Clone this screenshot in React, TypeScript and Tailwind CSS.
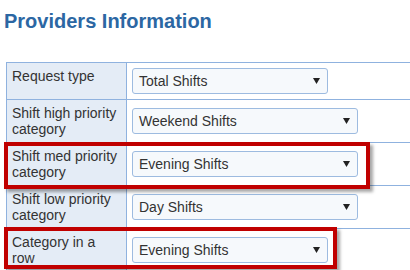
import React from "react";

const rows: { label: React.ReactNode; value: string; w: string }[] = [
  { label: "Request type", value: "Total Shifts", w: "w-[196px]" },
  { label: <>Shift high priority<br />category</>, value: "Weekend Shifts", w: "w-[226px]" },
  { label: <>Shift med priority<br />category</>, value: "Evening Shifts", w: "w-[226px]" },
  { label: <>Shift low priority<br />category</>, value: "Day Shifts", w: "w-[226px]" },
  { label: <>Category in a<br />row</>, value: "Evening Shifts", w: "w-[196px]" },
];

function Select({ value, w }: { value: string; w: string }) {
  return (
    <div
      className={`${w} h-[26px] flex items-center justify-between border border-[#9dbbe0] rounded-[3px] bg-[#f6f9fc] pl-[6px] pr-[7px] text-[14px] text-[#333]`}
    >
      <span>{value}</span>
      <svg width="7" height="6" viewBox="0 0 7 6">
        <polygon points="0,0 7,0 3.5,6" fill="#222" />
      </svg>
    </div>
  );
}

export default function App() {
  return (
    <div
      className="relative w-[410px] h-[270px] overflow-hidden bg-white"
      style={{ fontFamily: '"Liberation Sans", Arial, sans-serif' }}
    >
      <h1 className="ml-[4px] mt-[10px] text-[20px] leading-[22px] font-bold text-[#2c67a3]">
        Providers Information
      </h1>
      <table className="mt-[30px] ml-[6px] w-[430px] border-collapse">
        <tbody>
          {rows.map((r, i) => (
            <tr key={i}>
              <td className="w-[120px] border border-[#8fb2df] bg-[#e4ecf6] p-[5px] align-top text-[14px] leading-[16px] text-[#333]">
                {r.label}
              </td>
              <td className="border border-[#8fb2df] bg-white p-[5px] align-middle">
                <Select value={r.value} w={r.w} />
              </td>
            </tr>
          ))}
        </tbody>
      </table>
      <div className="absolute left-[4px] top-[142px] w-[366px] h-[47px] border-[4px] border-[#c00000] shadow-[3px_3px_3px_rgba(0,0,0,0.35)]" />
      <div className="absolute left-[4px] top-[227px] w-[333px] h-[42px] border-[4px] border-[#c00000] shadow-[3px_3px_3px_rgba(0,0,0,0.35)]" />
    </div>
  );
}
